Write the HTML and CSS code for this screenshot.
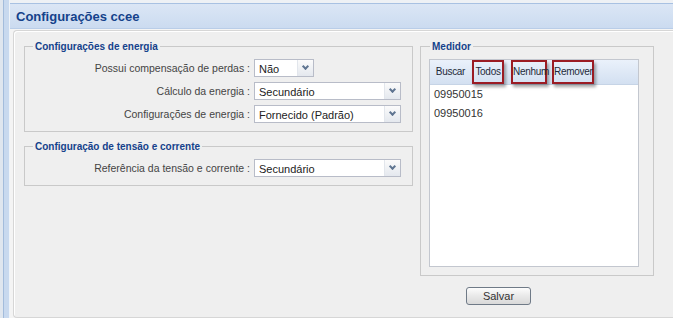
FILE: index.html
```html
<!DOCTYPE html>
<html lang="pt">
<head>
    <meta charset="UTF-8">
    <meta name="viewport" content="width=device-width, initial-scale=1.0">
    <title>Configurações ccee</title>
    <link rel="stylesheet" href="styles.css">
</head>
<body>
    <div class="window">
        <div class="frame-left"></div>
        <div class="main">
            <div class="title-bar">Configurações ccee</div>
            <div class="panel">
                <div class="left-col">
                    <fieldset class="group">
                        <legend>Configurações de energia</legend>
                        <div class="row">
                            <label>Possui compensação de perdas :</label>
                            <div class="combo small"><span>Não</span><i class="trigger"></i></div>
                        </div>
                        <div class="row">
                            <label>Cálculo da energia :</label>
                            <div class="combo"><span>Secundário</span><i class="trigger"></i></div>
                        </div>
                        <div class="row">
                            <label>Configurações de energia :</label>
                            <div class="combo"><span>Fornecido (Padrão)</span><i class="trigger"></i></div>
                        </div>
                    </fieldset>
                    <fieldset class="group second">
                        <legend>Configuração de tensão e corrente</legend>
                        <div class="row">
                            <label>Referência da tensão e corrente :</label>
                            <div class="combo"><span>Secundário</span><i class="trigger"></i></div>
                        </div>
                    </fieldset>
                </div>
                <div class="right-col">
                    <fieldset class="group medidor">
                        <legend>Medidor</legend>
                        <div class="list">
                            <div class="list-toolbar">
                                <span class="tool buscar">Buscar</span>
                                <span class="tool marked todos">Todos</span>
                                <span class="tool marked nenhum">Nenhum</span>
                                <span class="tool marked remover">Remover</span>
                            </div>
                            <div class="item">09950015</div>
                            <div class="item">09950016</div>
                        </div>
                    </fieldset>
                    <button class="save">Salvar</button>
                </div>
            </div>
        </div>
    </div>
</body>
</html>
```

FILE: styles.css
```css
/* Window frame */
body {
    margin: 0;
    background-color: #f4f4f4;
    font-family: 'Liberation Sans', Arial, sans-serif;
    font-size: 11px;
    color: #333;
}

.window {
    display: flex;
    height: 318px;
    overflow: hidden;
}

.frame-left {
    width: 10px;
    flex: none;
    background: linear-gradient(to right, #dfe6ef 0 3px, #a3bcdc 3px 4px, #c8d9ef 4px 9px, #eef3f9 9px);
}

.main {
    flex: 1;
    display: flex;
    flex-direction: column;
    border-top: 3px solid #eef1f5;
}

.title-bar {
    height: 24px;
    line-height: 25px;
    padding-left: 6px;
    background: linear-gradient(#dbe6f5, #cbdbf0);
    border-top: 1px solid #a8c1e2;
    border-bottom: 1px solid #b9cde8;
    color: #15428b;
    font-weight: bold;
    font-size: 13px;
}

.panel {
    margin: 1px 0 0 3px;
    height: 283px;
    display: flex;
    gap: 7px;
    padding: 9px 0 0 10px;
    background-color: #efefef;
    border: 1px solid #d6d6d6;
    border-right: none;
    border-radius: 4px 0 0 4px;
    box-shadow: inset 1px 1px 0 #fff;
}

/* Fieldsets */
.group {
    margin: 0;
    padding: 0 10px 8px;
    border: 1px solid #c9c9c9;
}

.group legend {
    margin-left: -2px;
    padding: 0 2px;
    line-height: 13px;
    color: #15428b;
    font-weight: bold;
    font-size: 10px;
}

.left-col {
    width: 389px;
    flex: none;
}

.second {
    margin-top: 8px;
}

.row {
    display: flex;
    align-items: center;
    margin-top: 5px;
}

.row:first-of-type {
    margin-top: 6px;
}

.row label {
    width: 215px;
    text-align: right;
    padding-right: 4px;
    color: #444;
    font-size: 10.5px;
}

.combo {
    width: 145px;
    height: 16px;
    display: flex;
    align-items: center;
    background-color: #fff;
    border: 1px solid #b8bcc8;
    color: #222;
    font-size: 11px;
}

.combo.small {
    width: 58px;
}

.combo span {
    flex: 1;
    padding-left: 4px;
    padding-top: 2px;
}

.trigger {
    width: 15px;
    height: 16px;
    background: linear-gradient(#fbfbfb, #e4e8ee);
    border-left: 1px solid #e2e6ec;
    position: relative;
}

.trigger::after {
    content: "";
    position: absolute;
    left: 5px;
    top: 4px;
    width: 3px;
    height: 3px;
    border-right: 2px solid #5f7591;
    border-bottom: 2px solid #5f7591;
    transform: rotate(45deg);
}

/* Medidor list */
.right-col {
    width: 234px;
    flex: none;
}

.medidor {
    padding: 0 14px 8px 8px;
}

.medidor legend {
    margin-left: 1px;
}

.list {
    margin-top: 6px;
    height: 206px;
    background-color: #fff;
    border: 1px solid #c3c7cf;
}

.list-toolbar {
    height: 24px;
    display: flex;
    align-items: center;
    background: linear-gradient(#eaf1fb, #d3e0f1);
    border-bottom: 1px solid #c6d4e6;
    color: #1e2a3a;
    font-size: 10px;
    letter-spacing: -0.3px;
}

.tool {
    box-sizing: border-box;
    height: 24px;
    line-height: 20px;
    text-align: center;
    white-space: nowrap;
}

.buscar {
    width: 35px;
    margin-left: 3px;
    line-height: 24px;
}

.marked {
    border: 2px solid #9b1c24;
    box-shadow: 2px 3px 3px rgba(0, 0, 0, 0.35);
}

.todos {
    width: 32px;
    margin-left: 4px;
}

.nenhum {
    width: 36px;
    margin-left: 7px;
}

.remover {
    width: 42px;
    margin-left: 5px;
}

.item {
    height: 19px;
    line-height: 19px;
    padding-left: 4px;
    color: #333;
}

.save {
    display: block;
    margin: 11px 0 0 46px;
    width: 65px;
    height: 18px;
    padding: 0;
    font-family: 'Liberation Sans', Arial, sans-serif;
    font-size: 11px;
    color: #333;
    background: linear-gradient(#fdfdfd, #e9e9e9 50%, #d9d9d9);
    border: 1px solid #6f7a87;
    border-radius: 3px;
}
```
